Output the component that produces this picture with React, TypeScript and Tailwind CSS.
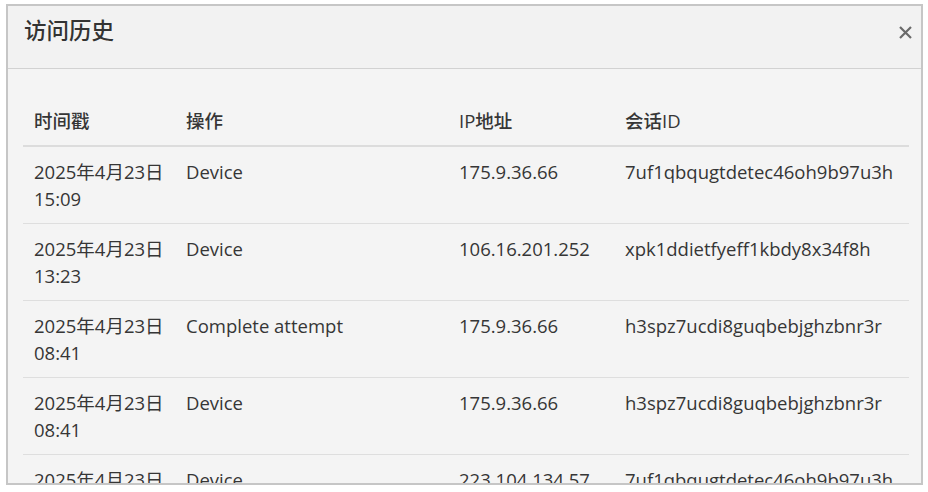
const rows = [
  { time: "2025年4月23日 15:09", action: "Device", ip: "175.9.36.66", session: "7uf1qbqugtdetec46oh9b97u3h" },
  { time: "2025年4月23日 13:23", action: "Device", ip: "106.16.201.252", session: "xpk1ddietfyeff1kbdy8x34f8h" },
  { time: "2025年4月23日 08:41", action: "Complete attempt", ip: "175.9.36.66", session: "h3spz7ucdi8guqbebjghzbnr3r" },
  { time: "2025年4月23日 08:41", action: "Device", ip: "175.9.36.66", session: "h3spz7ucdi8guqbebjghzbnr3r" },
  { time: "2025年4月23日 08:20", action: "Device", ip: "223.104.134.57", session: "7uf1qbqugtdetec46oh9b97u3h" },
];

export default function App() {
  return (
    <div
      className="h-[492px] w-[928px] overflow-hidden bg-white pl-[6px] pt-[4px] text-[#363636]"
      style={{ fontFamily: '"Open Sans", "Noto Sans CJK SC", sans-serif' }}
    >
      <div className="flex h-[481px] w-[917px] flex-col overflow-hidden border-2 border-[#c6c6c6] bg-[#f4f4f4]">
        <div className="flex h-[63px] shrink-0 items-start justify-between border-b border-[#d2d2d2] bg-[#f2f2f2] pl-[16px] pr-[4px] pt-[14px]">
          <h2 className="text-[22.5px] font-medium leading-none text-[#333]">访问历史</h2>
          <button className="flex h-6 w-6 items-center justify-center text-[#6a6a6a]">
            <svg width="15" height="15" viewBox="0 0 15 15">
              <path d="M2 2 L13 13 M13 2 L2 13" stroke="currentColor" strokeWidth="2.2" />
            </svg>
          </button>
        </div>
        <div className="flex-1 overflow-hidden pl-[15px] pr-[12px] pt-[27px]">
          <table className="w-full table-fixed border-collapse text-[18.5px] leading-[27px]">
            <colgroup>
              <col className="w-[152px]" />
              <col className="w-[273px]" />
              <col className="w-[166px]" />
              <col />
            </colgroup>
            <thead>
              <tr className="border-b-2 border-[#dcdcdc]">
                <th className="px-[11px] py-[11px] text-left font-medium">时间戳</th>
                <th className="px-[11px] py-[11px] text-left font-medium">操作</th>
                <th className="px-[11px] py-[11px] text-left font-medium">IP地址</th>
                <th className="px-[11px] py-[11px] text-left font-medium">会话ID</th>
              </tr>
            </thead>
            <tbody>
              {rows.map((r, i) => (
                <tr key={i} className="border-b border-[#dedede] align-top">
                  <td className="px-[11px] py-[11px]">{r.time}</td>
                  <td className="px-[11px] py-[11px]">{r.action}</td>
                  <td className="px-[11px] py-[11px]">{r.ip}</td>
                  <td className="px-[11px] py-[11px]">{r.session}</td>
                </tr>
              ))}
            </tbody>
          </table>
        </div>
      </div>
    </div>
  );
}
